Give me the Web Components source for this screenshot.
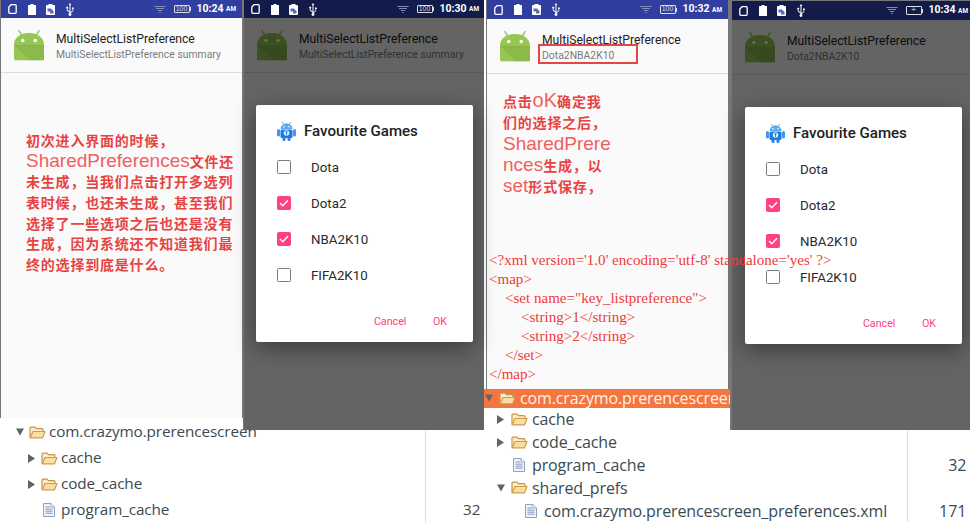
<!DOCTYPE html>
<html lang="zh">
<head>
<meta charset="utf-8">
<title>MultiSelectListPreference</title>
<style>
html,body{margin:0;padding:0;background:#fff;width:970px;height:528px;overflow:hidden}
</style>
</head>
<body>
<x-collage>
  <x-phones>
    <x-phone style="--w:243px;--bl:1px;--br:1px;--spr:6px" time="10:24" summary="MultiSelectListPreference summary" battery="100"></x-phone>
    <x-phone style="--w:241px;--bl:1px;--br:0px;--z:2;--spr:5px" time="10:30" summary="MultiSelectListPreference summary" battery="100" dim>
      <x-dialog style="--dl:12px;--dt:105px"></x-dialog>
    </x-phone>
    <x-phone style="--w:244px;--bl:1px;--br:2px;--ml:2px;--sh:19px;--spr:6px" time="10:32" summary="Dota2NBA2K10" battery="100"></x-phone>
    <x-phone style="--w:240px;--bl:2px;--br:0px;--bt:1px;--sh:19px;--z:2;--spr:2px" time="10:34" summary="Dota2NBA2K10" battery="charge" dim>
      <x-dialog style="--dl:13px;--dt:106px"></x-dialog>
    </x-phone>
  </x-phones>
  <x-trees>
    <x-tree style="--w:484px;--mt:-12px;--pl:16px;--pt:1px;--rh:26px;--sc:59px;--fs:15.3px;--tw:13px;--ic:20px">
      <x-row level="0" twist="open" icon="folder">com.crazymo.prerencescreen</x-row>
      <x-row level="1" twist="closed" icon="folder">cache</x-row>
      <x-row level="1" twist="closed" icon="folder">code_cache</x-row>
      <x-row level="1" icon="file" size="32">program_cache</x-row>
    </x-tree>
    <x-tree style="--w:486px;--mt:-41px;--pl:1px;--pt:0px;--rh:22.8px;--sc:63px;--fs:16px;--tw:14px;--ic:21px">
      <x-row level="0" twist="open" icon="folder" selected>com.crazymo.prerencescreen</x-row>
      <x-row level="1" twist="closed" icon="folder">cache</x-row>
      <x-row level="1" twist="closed" icon="folder">code_cache</x-row>
      <x-row level="1" icon="file" size="32">program_cache</x-row>
      <x-row level="1" twist="open" icon="folder">shared_prefs</x-row>
      <x-row level="2" icon="file" size="171">com.crazymo.prerencescreen_preferences.xml</x-row>
    </x-tree>
  </x-trees>

  <x-note style="--x:26px;--y:130px;--lh:20.7px">
    <span>初次进入界面的时候，</span>
    <span><b>SharedPreferences</b>文件还</span>
    <span>未生成，当我们点击打开多选列</span>
    <span>表时候，也还未生成，甚至我们</span>
    <span>选择了一些选项之后也还是没有</span>
    <span>生成，因为系统还不知道我们最</span>
    <span>终的选择到底是什么。</span>
  </x-note>
  <x-note style="--x:503px;--y:91px;--lh:21.3px">
    <span>点击<b class="big">oK</b>确定我</span>
    <span>们的选择之后，</span>
    <span><b>SharedPrere</b></span>
    <span><b>nces</b>生成，以</span>
    <span><b>set</b>形式保存，</span>
  </x-note>
  <x-xml style="--x:489px;--y:250.5px">
    <div>&lt;?xml version='1.0' encoding='utf-8' standalone='yes' ?&gt;</div>
    <div>&lt;map&gt;</div>
    <div class="i1">&lt;set name="key_listpreference"&gt;</div>
    <div class="i2">&lt;string&gt;1&lt;/string&gt;</div>
    <div class="i2">&lt;string&gt;2&lt;/string&gt;</div>
    <div class="i1">&lt;/set&gt;</div>
    <div>&lt;/map&gt;</div>
  </x-xml>
</x-collage>

<template id="t-android">
  <style>:host{display:block;width:30px;height:32px;flex:none}svg{display:block}</style>
  <svg width="30" height="32" viewBox="0 0 30 32">
    <path d="M4.500 1.200 8.200 6.500M25.500 1.200 21.800 6.500" stroke="#98c45a" stroke-width="1.400" fill="none"/>
    <path d="M0 16C0 8.500 6.500 4 15 4S30 8.500 30 16V29.500A1.800 1.800 0 0 1 28.200 31.300H1.800A1.800 1.800 0 0 1 0 29.500Z" fill="#96c653"/>
    <path d="M0 16H30V31.300H15.500Z" fill="#8bb94a"/>
    <path d="M0 16H30V17H0Z" fill="#86b344"/>
    <path d="M1 31.300H29L30 32H0Z" fill="#d9e4c8"/>
    <circle cx="8.800" cy="11.500" r="1.700" fill="#fff"/><circle cx="21.200" cy="11.500" r="1.700" fill="#fff"/>
  </svg>
</template>

<template id="t-status">
  <style>
    :host{display:flex;align-items:center;height:100%;background:#303f9f;color:#fff;font:700 10.5px/1 Roboto,sans-serif;box-sizing:border-box;padding-left:7px;padding-right:var(--spr,6px)}
    :host([dim]){background:#131b4b}
    svg{display:block;flex:none}
    .l{display:flex;align-items:center;gap:10.500px;flex:1}
    .r{display:flex;align-items:center}
    .box{box-sizing:border-box;width:16px;height:8.500px;border:1px solid #ddd;border-radius:1px;font:400 7px/6.500px "Liberation Sans",sans-serif;text-align:center;margin-left:8px;color:#ddd}
    .nub{width:1px;height:4px;background:#ddd;margin-right:6px}
    .am{font-size:6.400px;margin-left:2.500px;margin-top:1px}
    .chg{color:#46e04a;font-weight:700;font-size:8px}
  </style>
  <div class="l">
    <svg width="9" height="10" viewBox="0 0 9 10"><path d="M3 .7H7.200A1 1 0 0 1 8.200 1.700V8.300A1 1 0 0 1 7.200 9.300H1.800A1 1 0 0 1 .8 8.300V3Z" fill="none" stroke="#fff" stroke-width="1.300"/></svg>
    <svg width="8" height="11" viewBox="0 0 8 11"><path d="M2.500 0H5.500V1H7.500A.5.5 0 0 1 8 1.500V10.500A.5.5 0 0 1 7.500 11H.5A.5.5 0 0 1 0 10.500V1.500A.5.5 0 0 1 .5 1H2.500Z" fill="#fff"/></svg>
    <svg width="9" height="11" viewBox="0 0 9 11"><path d="M2.500 0H6.500V1H8A1 1 0 0 1 9 2V10A1 1 0 0 1 8 11H1A1 1 0 0 1 0 10V2A1 1 0 0 1 1 1H2.500Z" fill="#fff"/><path d="M1.500 4.500H5L7.500 7V9.500H4V7.500H1.500Z" fill="#5d6bb5"/></svg>
    <svg width="8" height="13" viewBox="0 0 8 13"><path d="M4 0 5.300 2H4.500V9.200L6.500 7.500V6H6V4.500H7.800V6H7.200V8L4.500 10.200V11H3.500V9.500L.8 7.500V5.600A1 1 0 1 1 1.600 5.600V7L3.500 8.300V2H2.700Z" fill="#fff"/><circle cx="4" cy="11.500" r="1.400" fill="#fff"/></svg>
  </div>
  <div class="r">
    <svg width="12" height="9" viewBox="0 0 12 9" fill="none" stroke="#8d95c6" stroke-width=".9"><path d="M.3 1.500H11.700M2 3.500H10M3.800 5.500H8.200M5.200 7.500H6.800"/></svg>
    <div class="box"></div><div class="nub"></div>
    <span class="t"></span><span class="am">AM</span>
  </div>
</template>

<template id="t-phone">
  <style>
    :host{display:flex;flex-direction:column;position:relative;flex:none;box-sizing:border-box;width:var(--w);height:430px;margin-left:var(--ml,0);z-index:var(--z,auto);background:#fafafa;border-style:solid;border-color:#777;border-width:var(--bt,0px) var(--br,0px) 0 var(--bl,0px);font-family:Roboto,sans-serif}
    x-status{height:var(--sh,18px);flex:none}
    .bar{height:55px;flex:none;box-sizing:border-box;border-bottom:1px solid #dcdcdc;display:flex;align-items:center;gap:12px;padding:0 0 0 13px}
    .txt{display:flex;flex-direction:column;gap:1px;padding-top:3px}
    .ti{font-size:12.150px;line-height:15px;color:#212121;white-space:nowrap}
    .su{font-size:10.400px;line-height:14px;color:#7a7a7a;white-space:nowrap}
    .body{flex:1}
    .mark{position:absolute;box-sizing:border-box;left:51px;top:44px;width:100px;height:20px;border:2px solid #e64545;display:none}
    .scrim{position:absolute;inset:var(--sh,18px) 0 0 0;background:rgba(0,0,0,.6);display:none}
    :host([dim]) .scrim{display:block}
    :host([summary="Dota2NBA2K10"]:not([dim])) .mark{display:block}
  </style>
  <x-status></x-status>
  <div class="bar">
    <x-android></x-android>
    <div class="txt"><div class="ti">MultiSelectListPreference</div><div class="su"></div></div>
  </div>
  <div class="body"></div>
  <div class="mark"></div>
  <div class="scrim"></div>
  <slot></slot>
</template>

<template id="t-dialog">
  <style>
    :host{position:absolute;left:var(--dl);top:var(--dt);width:217px;height:237px;background:#fff;border-radius:2px;box-shadow:0 6px 22px rgba(0,0,0,.42);box-sizing:border-box;padding:15px 0 0 21px;font-family:Roboto,sans-serif;display:flex;flex-direction:column}
    .h{display:flex;align-items:center;gap:8px;height:21px;margin-bottom:8px;font-size:15.100px;font-weight:500;color:#212121;white-space:nowrap}
    .acts{display:flex;gap:26.500px;justify-content:flex-end;padding-right:26px;margin-top:22px;font-size:10.700px;line-height:14px;color:#ff4081}
  </style>
  <div class="h">
    <svg width="19" height="21" viewBox="0 0 19 21">
      <path d="M5 2 6.500 4M14 2 12.500 4" stroke="#64b5f6" stroke-width="1"/>
      <path d="M3.500 9A6 5.800 0 0 1 15.500 9Z" fill="#56aef0"/>
      <rect x="3.500" y="9.500" width="12" height="8.500" rx="1.500" fill="#1e78e0"/>
      <rect x="0" y="9" width="3" height="7.500" rx="1.500" fill="#3f96ec"/><rect x="16" y="9" width="3" height="7.500" rx="1.500" fill="#3f96ec"/>
      <rect x="5.500" y="17" width="3" height="4" rx="1.200" fill="#2a84e4"/><rect x="10.500" y="17" width="3" height="4" rx="1.200" fill="#2a84e4"/>
      <circle cx="9.500" cy="13" r="2.800" fill="#e8f3fd"/><path d="M9.500 11.500V15M8.200 11.800H10.800" stroke="#1e78e0" stroke-width=".9"/>
      <circle cx="7" cy="6.800" r=".8" fill="#fff"/><circle cx="12" cy="6.800" r=".8" fill="#fff"/>
    </svg>
    <span>Favourite Games</span>
  </div>
  <x-check>Dota</x-check>
  <x-check checked>Dota2</x-check>
  <x-check checked>NBA2K10</x-check>
  <x-check>FIFA2K10</x-check>
  <div class="acts"><span>Cancel</span><span>OK</span></div>
</template>

<template id="t-check">
  <style>
    :host{display:flex;align-items:center;height:36px;gap:20.500px;font-size:13.300px;color:#2a2a2a;white-space:nowrap}
    .b{width:13.500px;height:13.500px;box-sizing:border-box;border:1.700px solid #7b7b7b;border-radius:1.500px;flex:none;display:flex;align-items:center;justify-content:center}
    :host([checked]) .b{background:#ff4081;border-color:#ff4081}
    svg{display:none}
    :host([checked]) svg{display:block}
  </style>
  <div class="b"><svg width="10" height="8" viewBox="0 0 10 8"><path d="M1 4 3.800 6.700 9 1.200" fill="none" stroke="#fff" stroke-width="1.400"/></svg></div>
  <slot></slot>
</template>

<template id="t-row">
  <style>
    :host{display:grid;grid-template-columns:1fr var(--sc);height:var(--rh);font:var(--fs)/1 "Open Sans",sans-serif;color:#3b4a52;white-space:nowrap}
    :host([selected]){height:19px;background:#f37640;color:#fff2e6}
    .n{display:flex;align-items:center;overflow:hidden;min-width:0;padding-left:calc(var(--pl) + 12px * var(--lv,0))}
    :host([selected]) .n{padding-bottom:1px;box-sizing:border-box}
    .tw{width:var(--tw);flex:none;display:flex}
    .ic{width:var(--ic);flex:none;display:flex}
    .s{border-left:1px solid #dedede;text-align:right;padding-right:3.500px;display:flex;align-items:center;justify-content:flex-end;color:#3b4a52}
    :host([selected]) .s{border:0}
    svg{display:block}
    .lbl{letter-spacing:-.12px}
  </style>
  <div class="n"><span class="tw"></span><span class="ic"></span><span class="lbl"><slot></slot></span></div>
  <div class="s"></div>
</template>

<template id="t-tree">
  <style>:host{display:block;flex:none;width:var(--w);margin-top:var(--mt);padding-top:var(--pt);background:#fff;z-index:1;height:max-content}</style>
  <slot></slot>
</template>

<template id="t-note">
  <style>
    :host{position:absolute;left:var(--x);top:var(--y);z-index:3;color:#e84343;font:700 14px/var(--lh) "Noto Sans CJK SC","Liberation Sans",sans-serif;letter-spacing:.8px;white-space:nowrap}
    ::slotted(span){display:block;height:var(--lh)}
  </style>
  <slot></slot>
</template>

<template id="t-xml">
  <style>
    :host{position:absolute;left:var(--x);top:var(--y);z-index:3;color:#ee3a3a;font:400 15.050px/19px "Liberation Serif",serif;white-space:nowrap}
    ::slotted(.i1){padding-left:16px}
    ::slotted(.i2){padding-left:32px}
  </style>
  <slot></slot>
</template>

<script>
function tpl(id){return document.getElementById(id).content.cloneNode(true)}
class Base extends HTMLElement{
  constructor(){super();this.attachShadow({mode:'open'}).appendChild(tpl(this.constructor.tid))}
}
class XCollage extends HTMLElement{
  constructor(){super();this.attachShadow({mode:'open'}).innerHTML='<style>:host{display:block;position:relative;width:970px;height:528px;overflow:hidden;background:#fff}</style><slot></slot>'}
}
class XPhones extends HTMLElement{
  constructor(){super();this.attachShadow({mode:'open'}).innerHTML='<style>:host{display:flex;height:430px}</style><slot></slot>'}
}
class XTrees extends HTMLElement{
  constructor(){super();this.attachShadow({mode:'open'}).innerHTML='<style>:host{display:flex;align-items:flex-start}</style><slot></slot>'}
}
class XAndroid extends Base{static tid='t-android'}
class XStatus extends Base{static tid='t-status'}
class XDialog extends Base{static tid='t-dialog'}
class XCheck extends Base{static tid='t-check'}
class XTree extends Base{static tid='t-tree'}
class XNote extends Base{
  static tid='t-note';
  connectedCallback(){
    this.querySelectorAll('b').forEach(b=>{
      b.style.cssText='font:400 '+(b.classList.contains('big')?'20px':'19px')+'/0 "Liberation Sans",sans-serif;color:#f0605f;letter-spacing:0';
    });
  }
}
class XXml extends Base{static tid='t-xml'}
class XPhone extends Base{
  static tid='t-phone';
  connectedCallback(){
    const s=this.shadowRoot;
    s.querySelector('.su').textContent=this.getAttribute('summary');
    const st=s.querySelector('x-status');
    st.setAttribute('time',this.getAttribute('time'));
    st.setAttribute('battery',this.getAttribute('battery'));
    if(this.hasAttribute('dim'))st.setAttribute('dim','');
    st.render();
  }
}
XStatus.prototype.render=function(){
  const s=this.shadowRoot;
  s.querySelector('.t').textContent=this.getAttribute('time');
  const b=s.querySelector('.box');
  if(this.getAttribute('battery')==='charge'){b.innerHTML='<span class="chg">+</span>'}
  else{b.textContent=this.getAttribute('battery')}
};
const FOLDER='<svg width="17" height="13" viewBox="0 0 17 13"><path d="M1 11.500V2.200A1 1 0 0 1 2 1.200H6L7.500 2.700H13A1 1 0 0 1 14 3.700V5" fill="#fbeccb" stroke="#c99545" stroke-width="1.200"/><path d="M1.200 11.800 4 5.500H16L13.500 11.800Z" fill="#f9dfa6" stroke="#d39a45" stroke-width="1.200" stroke-linejoin="round"/></svg>';
const FILE='<svg width="12" height="14" viewBox="0 0 12 14" style="margin-left:2px"><path d="M.5.5H8L11.500 4V13.500H.5Z" fill="#eef2fa" stroke="#8fa1c4"/><path d="M8 .5V4H11.500" fill="#fff" stroke="#8fa1c4"/><path d="M2.500 4H7M2.500 6.200H9.500M2.500 8.200H9.500M2.500 10.200H9.500" stroke="#8a9bbd"/></svg>';
class XRow extends Base{
  static tid='t-row';
  connectedCallback(){
    const s=this.shadowRoot;
    this.style.setProperty('--lv',this.getAttribute('level')||0);
    const t=this.getAttribute('twist');
    const col='#5f6468';
    if(t==='open')s.querySelector('.tw').innerHTML='<svg width="8" height="8" viewBox="0 0 8 8"><path d="M0 .5H8L4 7.500Z" fill="'+col+'"/></svg>';
    if(t==='closed')s.querySelector('.tw').innerHTML='<svg width="7" height="9" viewBox="0 0 7 9"><path d="M0 0 7 4.500 0 9Z" fill="'+col+'"/></svg>';
    s.querySelector('.ic').innerHTML=this.getAttribute('icon')==='file'?FILE:FOLDER;
    if(this.hasAttribute('size'))s.querySelector('.s').textContent=this.getAttribute('size');
  }
}
customElements.define('x-android',XAndroid);
customElements.define('x-status',XStatus);
customElements.define('x-check',XCheck);
customElements.define('x-dialog',XDialog);
customElements.define('x-phone',XPhone);
customElements.define('x-row',XRow);
customElements.define('x-tree',XTree);
customElements.define('x-note',XNote);
customElements.define('x-xml',XXml);
customElements.define('x-phones',XPhones);
customElements.define('x-trees',XTrees);
customElements.define('x-collage',XCollage);
</script>
</body>
</html>
